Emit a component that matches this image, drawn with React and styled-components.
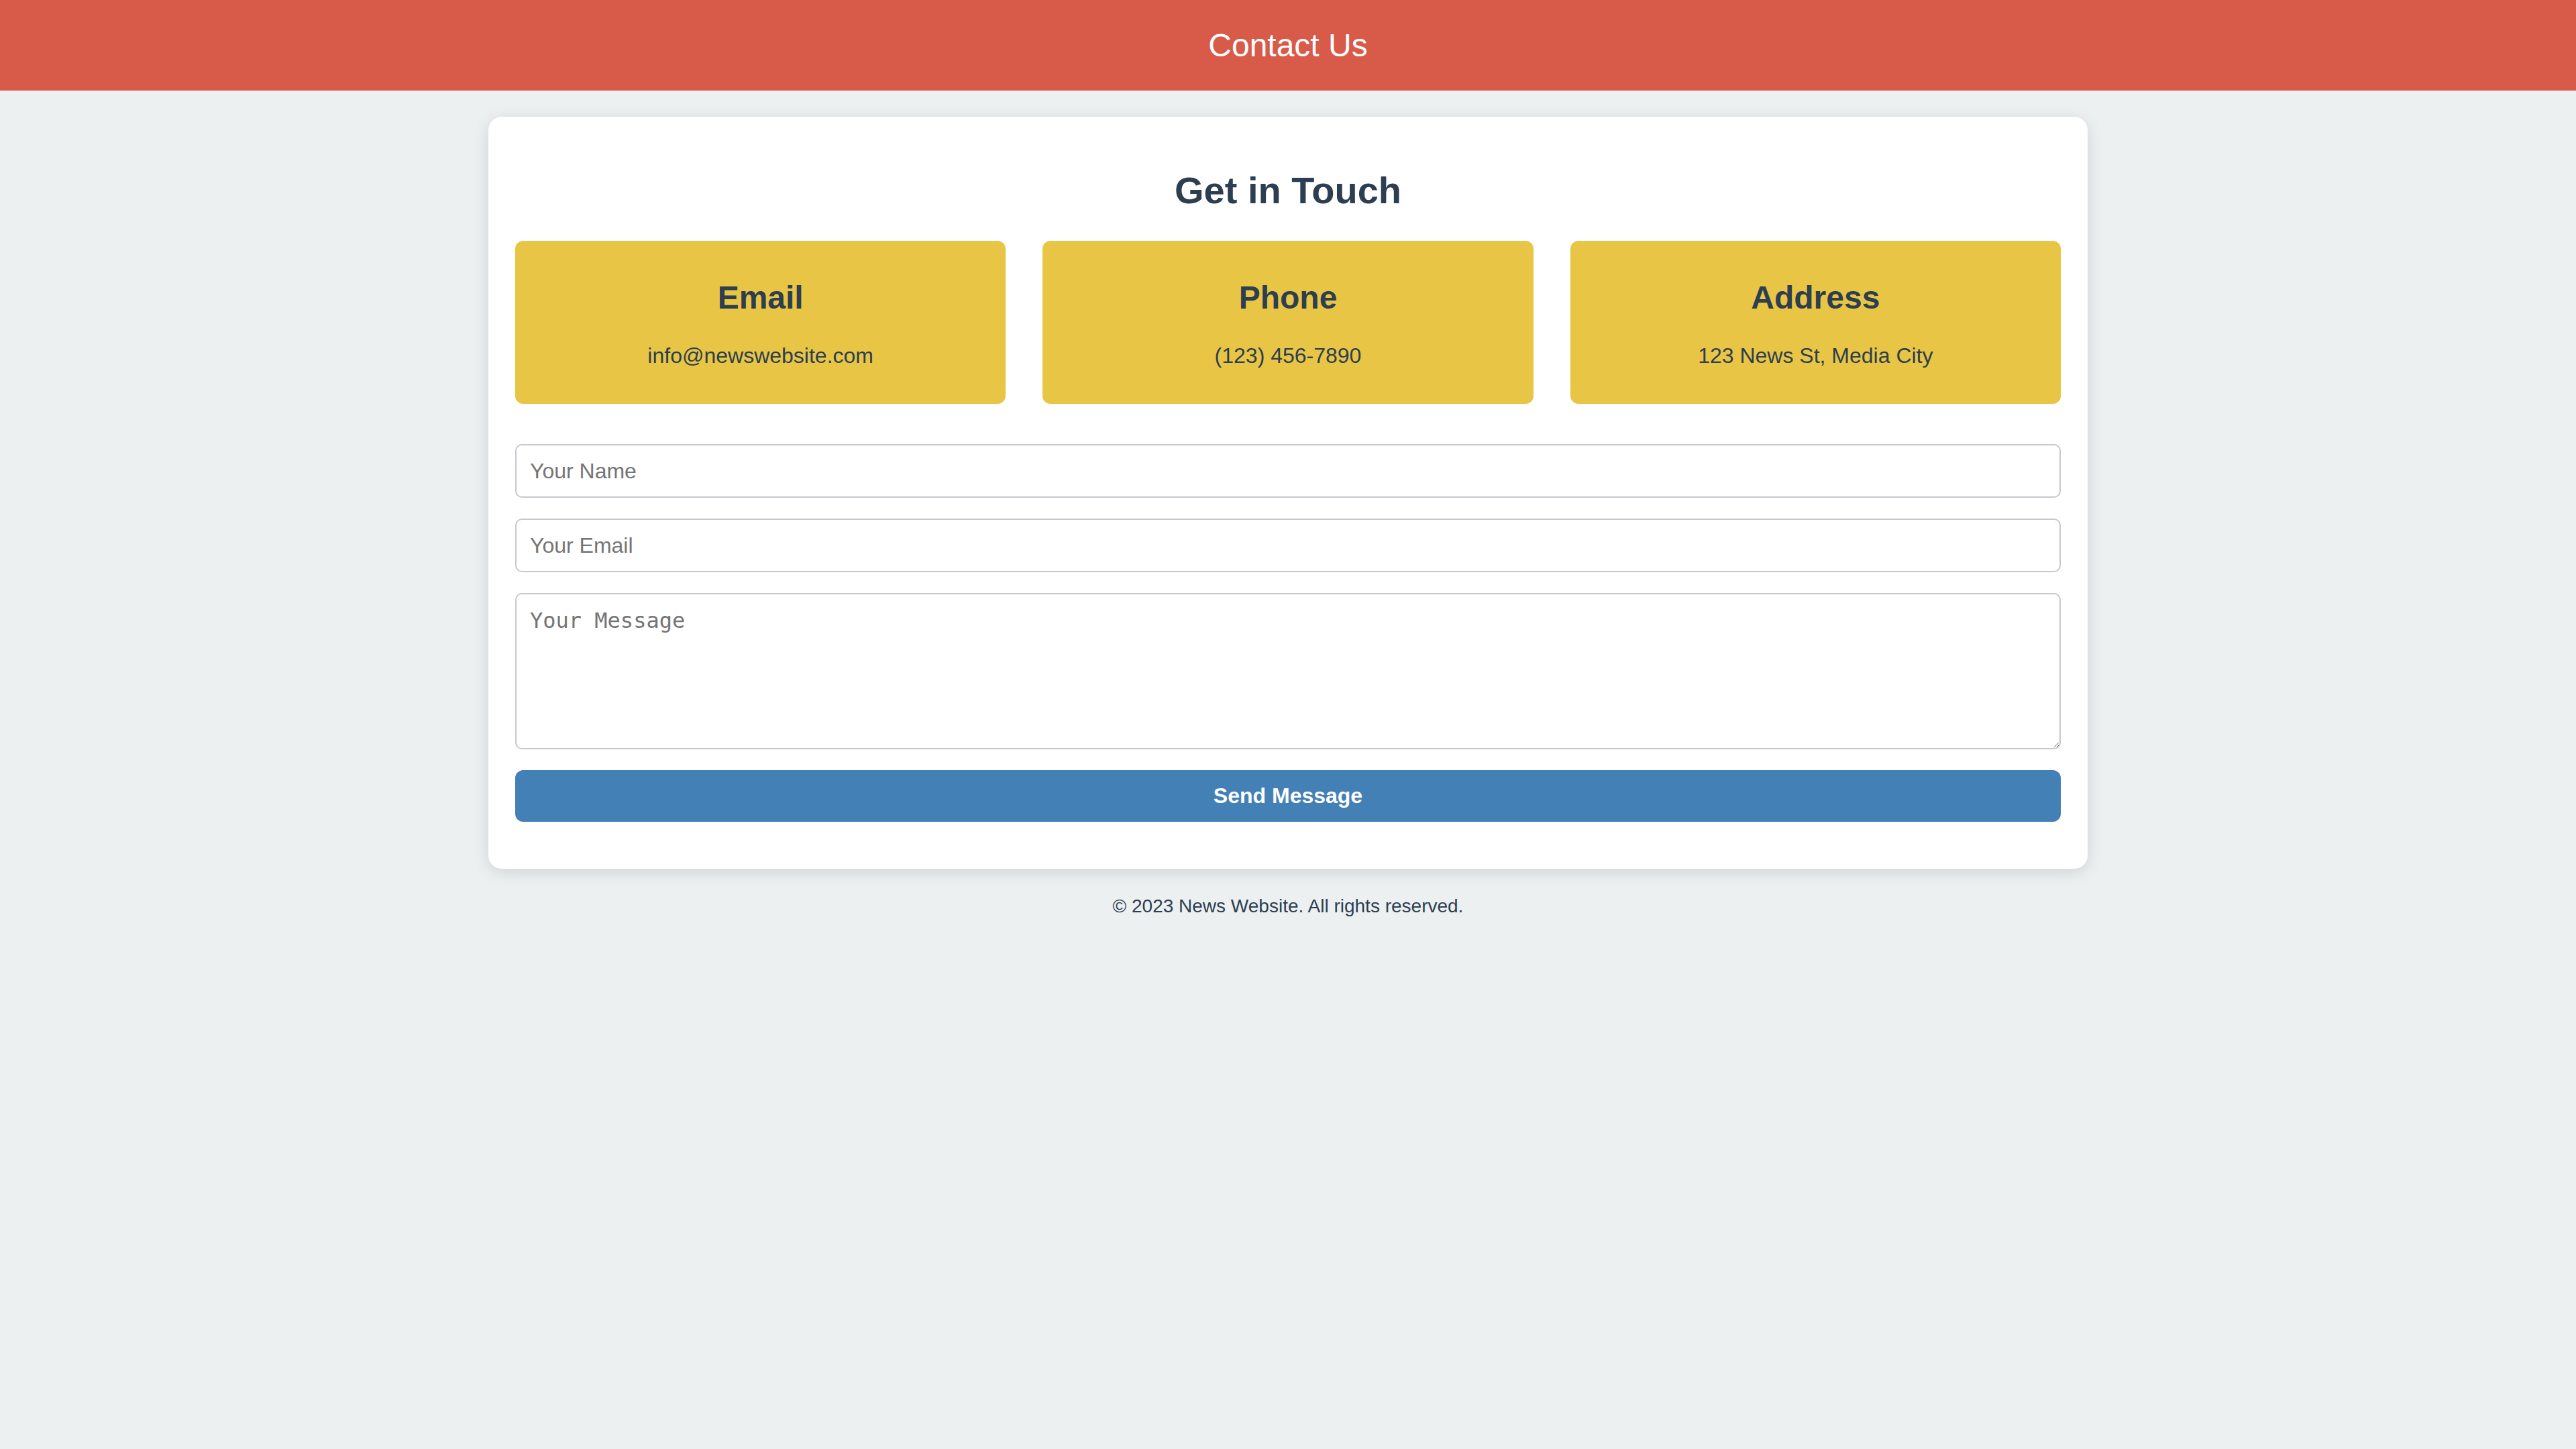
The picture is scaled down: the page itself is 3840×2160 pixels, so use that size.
import React from 'react';
import styled, { createGlobalStyle } from 'styled-components';

const GlobalStyle = createGlobalStyle`
  body {
    margin: 0;
    background-color: #ecf0f1;
    font-family: "Liberation Sans", Arial, sans-serif;
    color: #2c3e50;
  }
`;

const contacts = [
  { title: 'Email', value: 'info@newswebsite.com' },
  { title: 'Phone', value: '(123) 456-7890' },
  { title: 'Address', value: '123 News St, Media City' },
];

const ContactPage = () => {
  return (
    <>
      <GlobalStyle />
      <Header>
        <HeaderTitle>Contact Us</HeaderTitle>
      </Header>
      <Container>
        <Title>Get in Touch</Title>
        <InfoGrid>
          {contacts.map((item) => (
            <InfoCard key={item.title}>
              <InfoTitle>{item.title}</InfoTitle>
              <InfoText>{item.value}</InfoText>
            </InfoCard>
          ))}
        </InfoGrid>
        <Form onSubmit={(e) => e.preventDefault()}>
          <Input type="text" placeholder="Your Name" />
          <Input type="email" placeholder="Your Email" />
          <TextArea placeholder="Your Message" />
          <SubmitButton type="submit">Send Message</SubmitButton>
        </Form>
      </Container>
      <Footer>© 2023 News Website. All rights reserved.</Footer>
    </>
  );
};

const Header = styled.header`
  background-color: #d85a48;
  height: 135px;
  display: flex;
  align-items: center;
  justify-content: center;
`;

const HeaderTitle = styled.h1`
  margin: 0;
  color: #fff;
  font-size: 48px;
  font-weight: normal;
`;

const Container = styled.main`
  box-sizing: border-box;
  width: 2384px;
  margin: 39px auto 0;
  padding: 40px 40px 70px;
  background-color: #fff;
  border-radius: 20px;
  box-shadow: 0 5px 25px rgba(0, 0, 0, 0.12);
`;

const Title = styled.h2`
  margin: 37px 0 43px;
  text-align: center;
  font-size: 56px;
  font-weight: bold;
  color: #2c3e50;
`;

const InfoGrid = styled.div`
  display: grid;
  grid-template-columns: repeat(3, 1fr);
  gap: 55px;
`;

const InfoCard = styled.div`
  background-color: #e8c544;
  border-radius: 12px;
  padding: 57px 20px 53px;
  text-align: center;
`;

const InfoTitle = styled.h3`
  margin: 0 0 41px;
  font-size: 48px;
  font-weight: bold;
  color: #2c3e50;
`;

const InfoText = styled.p`
  margin: 0;
  font-size: 32px;
  color: #2c3e50;
`;

const Form = styled.form`
  display: flex;
  flex-direction: column;
  gap: 31px;
  margin-top: 60px;
`;

const fieldStyles = `
  box-sizing: border-box;
  width: 100%;
  padding: 20px;
  border: 2px solid #c5c9cd;
  border-radius: 10px;
  font-size: 32px;
  color: #2c3e50;
  background: #fff;
  outline: none;

  &::placeholder {
    color: #757575;
  }
`;

const Input = styled.input`
  ${fieldStyles}
  height: 80px;
  font-family: "Liberation Sans", Arial, sans-serif;
`;

const TextArea = styled.textarea`
  ${fieldStyles}
  height: 233px;
  font-family: "DejaVu Sans Mono", monospace;
  resize: vertical;
  display: block;
`;

const SubmitButton = styled.button`
  height: 77px;
  border: none;
  border-radius: 12px;
  background-color: #4380b5;
  color: #fff;
  font-family: "Liberation Sans", Arial, sans-serif;
  font-size: 32px;
  font-weight: bold;
  cursor: pointer;

  &:hover {
    background-color: #3a6f9e;
  }
`;

const Footer = styled.footer`
  margin-top: 40px;
  text-align: center;
  font-size: 28px;
  color: #2c3e50;
`;

export default ContactPage;
